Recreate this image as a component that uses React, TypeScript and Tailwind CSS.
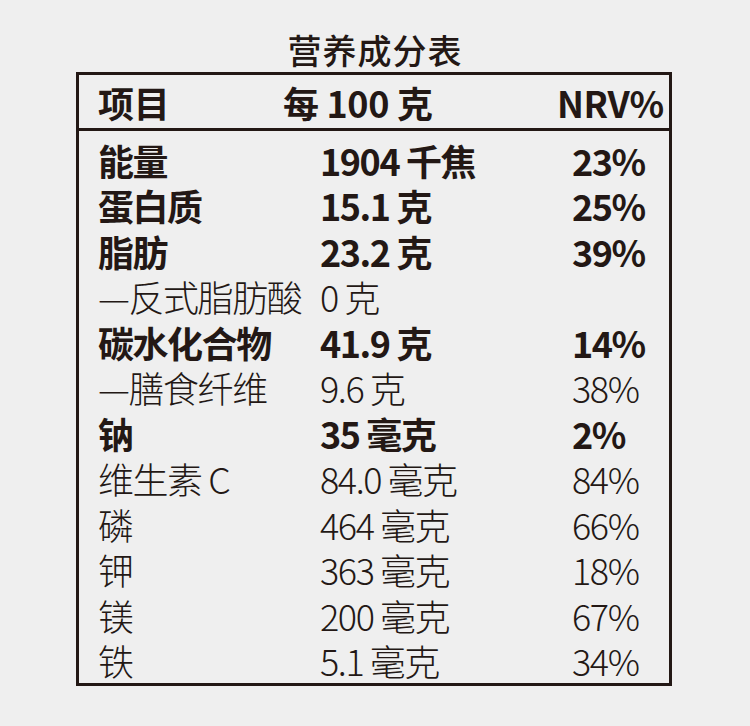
type Row = {
  name: string;
  amount: string;
  nrv?: string;
  bold?: boolean;
};

const rows: Row[] = [
  { name: '能量', amount: '1904 千焦', nrv: '23%', bold: true },
  { name: '蛋白质', amount: '15.1 克', nrv: '25%', bold: true },
  { name: '脂肪', amount: '23.2 克', nrv: '39%', bold: true },
  { name: '—反式脂肪酸', amount: '0 克' },
  { name: '碳水化合物', amount: '41.9 克', nrv: '14%', bold: true },
  { name: '—膳食纤维', amount: '9.6 克', nrv: '38%' },
  { name: '钠', amount: '35 毫克', nrv: '2%', bold: true },
  { name: '维生素 C', amount: '84.0 毫克', nrv: '84%' },
  { name: '磷', amount: '464 毫克', nrv: '66%' },
  { name: '钾', amount: '363 毫克', nrv: '18%' },
  { name: '镁', amount: '200 毫克', nrv: '67%' },
  { name: '铁', amount: '5.1 毫克', nrv: '34%' }
];

export default function App() {
  return (
    <div
      className="h-[726px] w-[750px] bg-[#efefef] text-[#231815]"
      style={{ fontFamily: '"Noto Sans CJK SC", "Noto Sans", sans-serif' }}
    >
      <h1 className="pt-[28px] text-center text-[34px] font-medium leading-[44px] tracking-[0.03em]">营养成分表</h1>

      <div className="ml-[76px] w-[596px] border-[3px] border-[#231815]">
        <div className="flex h-[56px] items-center border-b-[3px] border-[#231815] pl-[19px] text-[36px] font-bold leading-none tracking-[-0.01em]">
          <span className="w-[185px]">项目</span>
          <span className="w-[274px]">每 100 克</span>
          <span>NRV%</span>
        </div>

        <div className="pt-[6px]">
          {rows.map((row) => (
            <div
              key={row.name}
              className={`flex h-[45.5px] items-center pl-[19px] text-[36px] leading-[36px] tracking-[-0.04em] ${
                row.bold ? 'font-bold' : 'font-light'
              }`}
            >
              <span className="w-[222px] whitespace-nowrap">{row.name}</span>
              <span className="w-[252px] whitespace-nowrap">{row.amount}</span>
              <span>{row.nrv}</span>
            </div>
          ))}
        </div>
      </div>
    </div>
  );
}
